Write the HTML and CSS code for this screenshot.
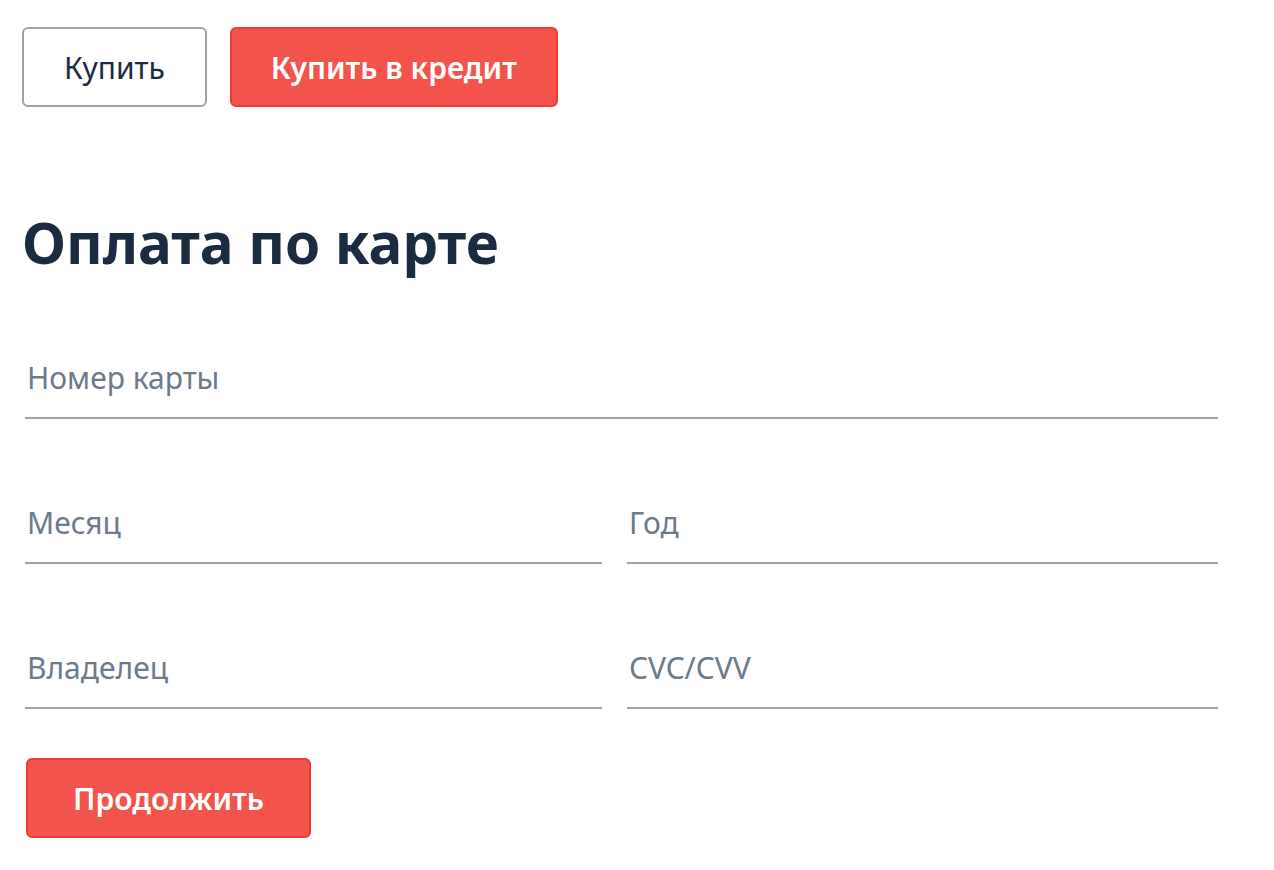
FILE: index.html
```html
<!DOCTYPE html>
<html lang="ru">
<head>
<meta charset="utf-8">
<title>Оплата по карте</title>
<link rel="stylesheet" href="styles.css">
</head>
<body>
<div class="page">
  <div class="actions">
    <button class="btn btn-outline" type="button">Купить</button>
    <button class="btn btn-primary btn-credit" type="button">Купить в кредит</button>
  </div>
  <h1 class="title">Оплата по карте</h1>
  <form class="form">
    <div class="field field-wide"><span class="label">Номер карты</span></div>
    <div class="field"><span class="label">Месяц</span></div>
    <div class="field"><span class="label">Год</span></div>
    <div class="field"><span class="label">Владелец</span></div>
    <div class="field"><span class="label">CVC/CVV</span></div>
    <div class="submit-row">
      <button class="btn btn-primary btn-submit" type="button">Продолжить</button>
    </div>
  </form>
</div>
</body>
</html>
```

FILE: styles.css
```css
* { box-sizing: border-box; }
html, body { margin: 0; padding: 0; background: #fff; }
body {
  font-family: "Noto Sans", "Open Sans", "DejaVu Sans", sans-serif;
  color: #1b2b42;
}
.page {
  padding: 27px 0 0 22px;
}
.actions {
  display: flex;
  gap: 23px;
}
.btn {
  font-family: inherit;
  height: 80px;
  border-radius: 6px;
  font-size: 30px;
  padding: 0 40px;
  cursor: pointer;
}
.btn-outline {
  background: #fff;
  border: 2px solid #9aa4ae;
  color: #1b2b42;
  font-weight: 400;
  padding: 0 40px;
}
.btn-primary {
  background: #f2534a;
  border: 2px solid #ee3b31;
  color: #fff;
  font-weight: 600;
}
.btn-credit { padding: 0 39px; }
.title {
  margin: 101px 0 0 0;
  font-size: 56.6px;
  line-height: 68px;
  font-weight: 700;
  color: #1b2b42;
}
.form {
  margin: 63px 0 0 3px;
  width: 1193px;
  display: grid;
  grid-template-columns: 577px 1fr;
  column-gap: 25px;
  row-gap: 65px;
}
.field {
  height: 80px;
  border-bottom: 2px solid #9aa4ae;
  display: flex;
  align-items: center;
  padding-left: 2px;
  padding-bottom: 2px;
}
.field-wide { grid-column: 1 / -1; }
.label {
  font-size: 30px;
  color: #6c7a89;
}
.submit-row {
  grid-column: 1 / -1;
  margin-top: -16px;
  padding-left: 1px;
}
.btn-submit { padding: 0 45px; }
```
